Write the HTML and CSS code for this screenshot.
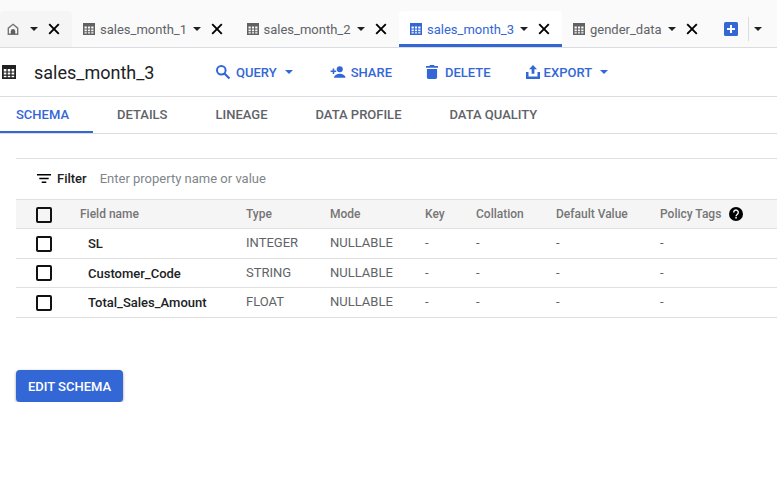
FILE: index.html
```html
<!DOCTYPE html>
<html>
<head>
    <title>sales_month_3</title>
    <link rel="stylesheet" href="styles.css">
</head>
<body>
    <svg class="defs" width="0" height="0">
        <symbol id="grid" viewBox="0 0 12 12">
            <path fill-rule="evenodd" d="M0 0h12v12H0zM1.5 3.5v2h2.3v-2zm3.4 0v2h2.2v-2zm3.3 0v2h2.3v-2zM1.500 6.500v1.700h2.300V6.500zm3.400 0v1.700h2.200V6.500zm3.300 0v1.700h2.300V6.500zM1.500 9.200v1.400h2.300V9.200zm3.400 0v1.400h2.200V9.200zm3.300 0v1.400h2.300V9.200z"/>
        </symbol>
        <symbol id="close" viewBox="0 0 12 12">
            <path d="M1.200 1.200l9.600 9.600M10.800 1.200l-9.600 9.600" fill="none" stroke="#000" stroke-width="1.900"/>
        </symbol>
    </svg>

    <!-- Tab strip -->
    <div class="tabstrip">
        <div class="tab tab-home">
            <svg class="home-icon" viewBox="0 0 12 12"><path d="M6 1.300l4.700 3.900v6H1.300V5.200z" fill="none" stroke="#757575" stroke-width="1.400"/><path d="M3.800 11V8.300a2.200 2.200 0 0 1 4.400 0V11z" fill="#616161"/></svg>
            <span class="caret caret-home"></span>
            <svg class="close-icon"><use href="#close"/></svg>
        </div>
        <div class="tab tab-1">
            <svg class="grid-icon"><use href="#grid"/></svg>
            <span class="tab-name">sales_month_1</span>
            <span class="caret"></span>
            <svg class="close-icon"><use href="#close"/></svg>
        </div>
        <div class="tab tab-2">
            <svg class="grid-icon"><use href="#grid"/></svg>
            <span class="tab-name">sales_month_2</span>
            <span class="caret"></span>
            <svg class="close-icon"><use href="#close"/></svg>
        </div>
        <div class="tab tab-active">
            <svg class="grid-icon"><use href="#grid"/></svg>
            <span class="tab-name">sales_month_3</span>
            <span class="caret"></span>
            <svg class="close-icon"><use href="#close"/></svg>
        </div>
        <div class="tab tab-4">
            <svg class="grid-icon"><use href="#grid"/></svg>
            <span class="tab-name">gender_data</span>
            <span class="caret"></span>
            <svg class="close-icon"><use href="#close"/></svg>
        </div>
        <div class="tab-add">
            <svg class="add-icon" viewBox="0 0 14 14"><rect width="14" height="14" rx="1.500" fill="#3367d6"/><path d="M7 3v8M3 7h8" stroke="#fff" stroke-width="2"/></svg>
            <span class="tab-divider"></span>
            <span class="caret"></span>
        </div>
    </div>

    <!-- Table title and actions -->
    <div class="titlebar">
        <svg class="title-icon"><use href="#grid"/></svg>
        <span class="title">sales_month_3</span>
        <div class="actions">
            <div class="action action-query">
                <svg viewBox="0 0 16 16"><circle cx="6.300" cy="6.300" r="4.300" fill="none" stroke="#3367d6" stroke-width="2"/><path d="M9.500 9.500l5 5" stroke="#3367d6" stroke-width="2.200"/></svg>
                QUERY
                <span class="caret caret-blue"></span>
            </div>
            <div class="action action-share">
                <svg viewBox="0 0 18 14"><circle cx="11" cy="3.800" r="3.400" fill="#3367d6"/><path fill="#3367d6" d="M4.500 13.500c0-3 4.300-4.500 6.500-4.500s6.500 1.500 6.500 4.500zM3 3h1.800v2.200H7V7H4.800v2.200H3V7H.7V5.200H3z"/></svg>
                SHARE
            </div>
            <div class="action action-delete">
                <svg viewBox="0 0 12 14"><path fill="#3367d6" d="M.9 4h10.200v8.300c0 .9-.7 1.600-1.600 1.600h-7c-.9 0-1.600-.7-1.600-1.600zM0 .9h3.300L4.100 0h3.800l.8.9H12v1.800H0z"/></svg>
                DELETE
            </div>
            <div class="action action-export">
                <svg viewBox="0 0 14 14"><path fill="#3367d6" d="M7 0l4 4.200H8.400v4.600H5.600V4.200H3zM0 7h2.500v4.500h9V7H14v7H0z"/></svg>
                EXPORT
                <span class="caret caret-blue"></span>
            </div>
        </div>
    </div>

    <!-- Sub tabs -->
    <div class="subtabs">
        <div class="subtab subtab-active">SCHEMA</div>
        <div class="subtab">DETAILS</div>
        <div class="subtab">LINEAGE</div>
        <div class="subtab">DATA PROFILE</div>
        <div class="subtab">DATA QUALITY</div>
    </div>

    <!-- Schema table -->
    <div class="schema">
        <div class="filter">
            <svg class="filter-icon" viewBox="0 0 14 9"><path d="M0 0h14v1.500H0zM2.300 3.700h9.400v1.500H2.300zM4.700 7.400h4.600v1.500H4.700z"/></svg>
            <span class="filter-label">Filter</span>
            <span class="filter-hint">Enter property name or value</span>
        </div>
        <div class="row row-head">
            <span class="checkbox"></span>
            <span>Field name</span>
            <span>Type</span>
            <span>Mode</span>
            <span>Key</span>
            <span>Collation</span>
            <span>Default Value</span>
            <span class="policy">Policy Tags
                <svg class="help-icon" viewBox="0 0 14 14"><circle cx="7" cy="7" r="7"/><path d="M4.700 5.400a2.300 2.300 0 1 1 3.700 1.800c-.9.700-1.300 1-1.300 2" fill="none" stroke="#fff" stroke-width="1.400"/><rect x="6.300" y="10" width="1.500" height="1.500" fill="#fff"/></svg>
            </span>
        </div>
        <div class="row">
            <span class="checkbox"></span>
            <span class="field">SL</span>
            <span>INTEGER</span>
            <span>NULLABLE</span>
            <span>-</span>
            <span>-</span>
            <span>-</span>
            <span>-</span>
        </div>
        <div class="row row-short">
            <span class="checkbox"></span>
            <span class="field">Customer_Code</span>
            <span>STRING</span>
            <span>NULLABLE</span>
            <span>-</span>
            <span>-</span>
            <span>-</span>
            <span>-</span>
        </div>
        <div class="row">
            <span class="checkbox"></span>
            <span class="field">Total_Sales_Amount</span>
            <span>FLOAT</span>
            <span>NULLABLE</span>
            <span>-</span>
            <span>-</span>
            <span>-</span>
            <span>-</span>
        </div>
    </div>

    <button class="edit-button">EDIT SCHEMA</button>
</body>
</html>
```

FILE: styles.css
```css
body {
    font-family: Roboto, "Liberation Sans", sans-serif;
    background-color: #fff;
    margin: 0;
    padding: 0;
    overflow: hidden;
}

.defs {
    position: absolute;
}

.caret {
    width: 0;
    height: 0;
    border-left: 4px solid transparent;
    border-right: 4px solid transparent;
    border-top: 4px solid #202124;
    flex-shrink: 0;
}

.caret-blue {
    border-top-color: #3367d6;
}

/* Tab strip */
.tabstrip {
    display: flex;
    padding-top: 11px;
    height: 36px;
    background-color: #fafafa;
    border-bottom: 1px solid #dadce0;
}

.tab {
    display: flex;
    align-items: center;
    box-sizing: border-box;
    height: 36px;
    padding: 0 0 0 11px;
    font-size: 13px;
    color: #5f6368;
    border-radius: 4px 4px 0 0;
}

.tab-home {
    width: 72px;
    padding-left: 7px;
    background-color: #f5f5f5;
}

.tab-1,
.tab-2 {
    width: 163.500px;
}

.tab-active {
    width: 163px;
    background-color: #fff;
    color: #3367d6;
    border-bottom: 3px solid #3367d6;
    padding-top: 3px;
}

.tab-4 {
    width: 151px;
}

.home-icon {
    width: 12px;
    height: 12px;
}

.caret-home {
    margin-left: 11px;
}

.grid-icon {
    width: 12px;
    height: 12px;
    margin-right: 5px;
    fill: #616161;
}

.tab-active .grid-icon {
    fill: #3367d6;
}

.tab-name {
    white-space: nowrap;
    margin-right: 6px;
}

.close-icon {
    width: 12px;
    height: 12px;
    margin-left: 10px;
}

.tab-add {
    display: flex;
    align-items: center;
    height: 36px;
    margin-left: 11px;
}

.add-icon {
    width: 14px;
    height: 14px;
    margin-right: 10px;
}

.tab-divider {
    width: 1px;
    height: 24px;
    background-color: #dadce0;
    margin-right: 5px;
}

/* Title row */
.titlebar {
    display: flex;
    align-items: center;
    height: 48px;
    border-bottom: 1px solid #dadce0;
}

.title-icon {
    width: 14px;
    height: 14px;
    margin-left: 2px;
    fill: #212121;
    flex-shrink: 0;
}

.title {
    font-size: 18px;
    color: #202124;
    margin-left: 18px;
    width: 181px;
}

.actions {
    display: flex;
    align-items: center;
}

.action {
    display: flex;
    align-items: center;
    font-size: 13px;
    font-weight: 500;
    color: #3367d6;
    white-space: nowrap;
}

.action .caret {
    margin-left: 8px;
}

.action-query svg {
    width: 16px;
    height: 16px;
    margin-right: 5px;
}

.action-share {
    margin-left: 37px;
}

.action-share svg {
    width: 16px;
    height: 14px;
    margin-right: 5px;
}

.action-delete {
    margin-left: 34px;
}

.action-delete svg {
    width: 12px;
    height: 14px;
    margin-right: 7px;
}

.action-export {
    margin-left: 35px;
}

.action-export svg {
    width: 14px;
    height: 14px;
    margin-right: 4px;
}

/* Sub tabs */
.subtabs {
    display: flex;
    height: 36px;
    border-bottom: 1px solid #dadce0;
}

.subtab {
    box-sizing: border-box;
    height: 36px;
    padding: 10px 24px 0;
    font-size: 13px;
    font-weight: 500;
    color: #5f6368;
    white-space: nowrap;
}

.subtab-active {
    width: 93px;
    padding-left: 16px;
    padding-right: 0;
    color: #3367d6;
    border-bottom: 2px solid #3367d6;
}

/* Schema table */
.schema {
    margin: 24px 0 0 16px;
    border-top: 1px solid #e0e0e0;
}

.filter {
    display: flex;
    align-items: center;
    height: 39px;
    padding: 0 0 1px 21px;
}

.filter-icon {
    width: 14px;
    height: 9px;
    margin-right: 6px;
}

.filter-label {
    font-size: 13px;
    font-weight: 500;
    color: #202124;
}

.filter-hint {
    font-size: 13px;
    color: #80868b;
    margin-left: 13px;
}

.row {
    display: grid;
    grid-template-columns: 64px 166px 84px 95px 51px 80px 104px 1fr;
    align-items: center;
    height: 29px;
    font-size: 13px;
    color: #5f6368;
    border-bottom: 1px solid #e0e0e0;
}

.row > span {
    padding-bottom: 2px;
}

.row-short {
    height: 28px;
}

.row-head {
    height: 28px;
    font-size: 12px;
    font-weight: 500;
    background-color: #f5f5f5;
    border-top: 1px solid #e0e0e0;
    color: #757575;
}

.row-head > span {
    padding-bottom: 1px;
}

.row > .checkbox {
    box-sizing: border-box;
    width: 16px;
    height: 16px;
    margin-left: 20px;
    padding: 0;
    border: 2px solid #111;
    border-radius: 2px;
}

.row-head > .checkbox {
    margin-top: 2px;
}

.row > .field {
    padding: 0 0 0 8px;
    font-weight: 500;
    color: #202124;
}

.policy {
    display: flex;
    align-items: center;
}

.help-icon {
    width: 14px;
    height: 14px;
    margin-left: 8px;
}

.edit-button {
    display: block;
    margin: 52px 0 0 16px;
    width: 107px;
    height: 32px;
    padding: 0;
    background-color: #3367d6;
    color: #fff;
    border: none;
    border-radius: 4px;
    font-family: inherit;
    font-size: 13px;
    font-weight: 500;
    box-shadow: 0 1px 3px rgba(0, 0, 0, 0.4);
}
```
